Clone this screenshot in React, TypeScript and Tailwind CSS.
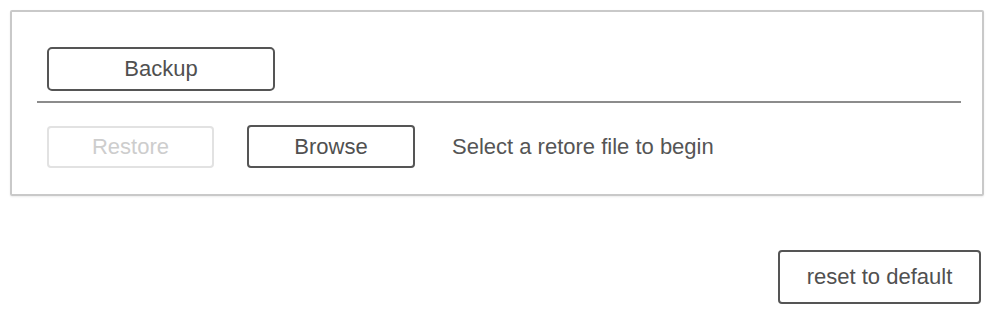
import React from "react";

const font = { fontFamily: '"Liberation Sans", Arial, sans-serif' };

const App = () => {
  return (
    <div className="w-[987px] h-[309px] bg-white overflow-hidden" style={font}>
      <div className="ml-[10px] mt-[10px] w-[974px] h-[186px] border-2 border-[#c9c9c9] rounded-[2px] pt-[35px] pl-[25px] pr-[21px] shadow-[0_1px_2px_rgba(0,0,0,0.08)]">
        <button className="ml-[10px] w-[228px] h-[44px] border-2 border-[#555] rounded-[5px] bg-white text-[22px] text-[#505050] leading-none">
          Backup
        </button>
        <div className="mt-[10px] h-[2px] bg-[#8c8c8c]" />
        <div className="mt-[22px] flex items-center">
          <button
            disabled
            className="ml-[10px] w-[167px] h-[42px] border-2 border-[#e2e2e2] rounded-[4px] bg-white text-[22px] text-[#cdcdcd] leading-none"
          >
            Restore
          </button>
          <button className="ml-[33px] w-[168px] h-[43px] border-2 border-[#555] rounded-[4px] bg-white text-[22px] text-[#505050] leading-none">
            Browse
          </button>
          <span className="ml-[37px] text-[22px] text-[#555] leading-none">
            Select a retore file to begin
          </span>
        </div>
      </div>
      <div className="flex justify-end mt-[54px] pr-[6px]">
        <button className="w-[203px] h-[54px] border-2 border-[#555] rounded-[4px] bg-white text-[22px] text-[#505050] leading-none">
          reset to default
        </button>
      </div>
    </div>
  );
};

export default App;
